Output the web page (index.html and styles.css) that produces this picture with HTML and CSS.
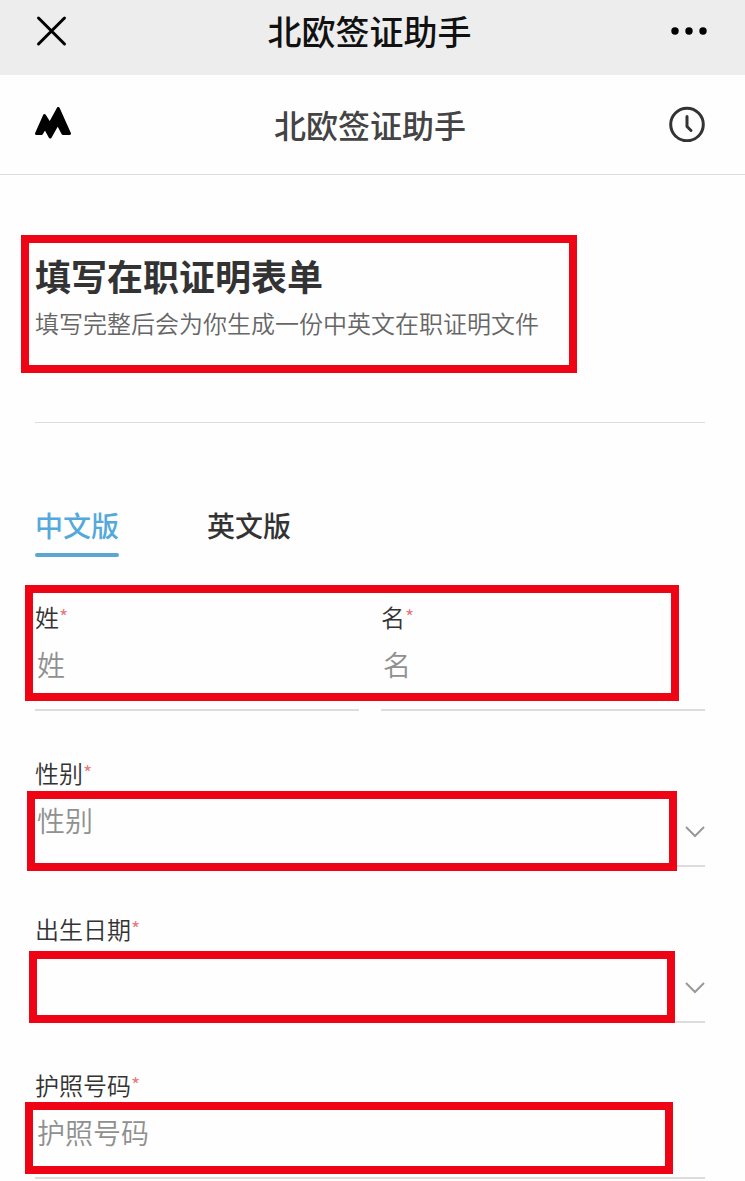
FILE: index.html
```html
<!DOCTYPE html>
<html lang="zh-CN">
<head>
    <meta charset="UTF-8">
    <meta name="viewport" content="width=device-width, initial-scale=1.0">
    <title>北欧签证助手</title>
    <link rel="stylesheet" href="styles.css">
</head>
<body>

    <div class="topbar">
        <button type="button" class="icon-btn" aria-label="关闭">
            <svg width="34" height="34" viewBox="0 0 34 34" fill="none" stroke="#000" stroke-width="3" stroke-linecap="round">
                <path d="M4.500 4L30.500 30M30.500 4L4.500 30"/>
            </svg>
        </button>
        <div class="topbar-title">北欧签证助手</div>
        <button type="button" class="icon-btn" aria-label="更多">
            <svg width="36" height="8" viewBox="0 0 36 8" fill="#000">
                <circle cx="4" cy="4" r="3.700"/>
                <circle cx="18" cy="4" r="3.700"/>
                <circle cx="32" cy="4" r="3.700"/>
            </svg>
        </button>
    </div>

    <header class="header">
        <a href="#" class="logo" aria-label="首页">
            <svg width="36" height="34" viewBox="0 0 36 34" fill="#000" stroke="#000" stroke-width="3" stroke-linejoin="round">
                <path d="M1.500 26.500L9.500 8.500L14.800 17L23.300 1.500L34.500 26.500H28L22.800 16.500L15.200 30L10 20.500L6.500 26.500Z"/>
            </svg>
        </a>
        <h1 class="header-title">北欧签证助手</h1>
        <button type="button" class="icon-btn" aria-label="历史记录">
            <svg width="36" height="36" viewBox="0 0 36 36" fill="none" stroke="#333" stroke-width="3" stroke-linecap="round" stroke-linejoin="round">
                <circle cx="18" cy="18.500" r="16.300"/>
                <path d="M18 10.500V20.500L22 24.500"/>
            </svg>
        </button>
    </header>

    <main class="content">
        <section class="intro">
            <h2>填写在职证明表单</h2>
            <p>填写完整后会为你生成一份中英文在职证明文件</p>
            <span class="mark mark-intro"></span>
        </section>

        <nav class="tabs">
            <a href="#" class="tab active">中文版</a>
            <a href="#" class="tab">英文版</a>
        </nav>

        <form class="form">
            <div class="row">
                <div class="field">
                    <label for="surname">姓<span class="required">*</span></label>
                    <input type="text" id="surname" placeholder="姓">
                </div>
                <div class="field">
                    <label for="name">名<span class="required">*</span></label>
                    <input type="text" id="name" placeholder="名">
                </div>
                <span class="mark mark-name"></span>
            </div>

            <div class="field">
                <label for="gender">性别<span class="required">*</span></label>
                <div class="select">
                    <select id="gender">
                        <option value="">性别</option>
                    </select>
                    <svg class="arrow" width="20" height="12" viewBox="0 0 20 12" fill="none" stroke="#999" stroke-width="2">
                        <path d="M1 1L10 10L19 1"/>
                    </svg>
                </div>
                <span class="mark mark-gender"></span>
            </div>

            <div class="field">
                <label for="birthday">出生日期<span class="required">*</span></label>
                <div class="select">
                    <select id="birthday">
                        <option value=""></option>
                    </select>
                    <svg class="arrow" width="20" height="12" viewBox="0 0 20 12" fill="none" stroke="#999" stroke-width="2">
                        <path d="M1 1L10 10L19 1"/>
                    </svg>
                </div>
                <span class="mark mark-birthday"></span>
            </div>

            <div class="field">
                <label for="passport">护照号码<span class="required">*</span></label>
                <input type="text" id="passport" placeholder="护照号码">
                <span class="mark mark-passport"></span>
            </div>
        </form>
    </main>

</body>
</html>
```
FILE: styles.css
```css
* {
    box-sizing: border-box;
}
body {
    margin: 0;
    font-family: "Noto Sans CJK SC", sans-serif;
    background-color: #fefefe;
    color: #333;
}
a {
    color: inherit;
    text-decoration: none;
}
.topbar,
.header {
    display: flex;
    align-items: center;
    justify-content: space-between;
}
.topbar {
    height: 75px;
    padding: 0 38px 14px 34px;
    background-color: #ededed;
}
.topbar-title {
    font-size: 34px;
    line-height: 40px;
    font-weight: 500;
    color: #111;
}
.header {
    height: 100px;
    padding: 0 40px 2px 35px;
    border-bottom: 1px solid #ddd;
}
.header-title {
    margin: 0;
    font-size: 32px;
    line-height: 40px;
    font-weight: 500;
    color: #444;
}
.icon-btn {
    display: flex;
    padding: 0;
    border: none;
    background: none;
    cursor: pointer;
}
.logo {
    display: flex;
}
.content {
    padding: 60px 40px 0 35px;
}
.intro {
    position: relative;
    padding: 16px 0 81px;
    border-bottom: 1px solid #ddd;
}
.intro h2 {
    margin: 0 0 6px;
    font-size: 36px;
    line-height: 48px;
    font-weight: 700;
}
.intro p {
    margin: 0;
    font-size: 24px;
    line-height: 36px;
    font-weight: 350;
    color: #666;
}
.tabs {
    display: flex;
    gap: 88px;
    margin: 82px 0 43px;
}
.tab {
    padding-bottom: 8px;
    border-bottom: 4px solid transparent;
    font-size: 28px;
    line-height: 40px;
    font-weight: 500;
}
.tab.active {
    position: relative;
    color: #54a9dc;
}
.tab.active::after {
    content: "";
    position: absolute;
    left: 0;
    right: 0;
    bottom: -4px;
    height: 4px;
    border-radius: 2px;
    background-color: #5ba7d1;
}
.form {
    display: flex;
    flex-direction: column;
    gap: 45px;
}
.row {
    position: relative;
    display: grid;
    grid-template-columns: 1fr 1fr;
    gap: 22px;
}
.field {
    position: relative;
}
.field label {
    display: block;
    margin-bottom: 2px;
    font-size: 24px;
    line-height: 34px;
    font-weight: 350;
}
.required {
    font-size: 20px;
    line-height: 20px;
    vertical-align: 2px;
    color: #e87878;
}
.field input,
.field select {
    display: block;
    width: 100%;
    height: 75px;
    margin: 0;
    padding: 0 2px 17px;
    border: none;
    border-bottom: 2px solid #ddd;
    border-radius: 0;
    outline: none;
    background: none;
    appearance: none;
    font-family: inherit;
    font-size: 28px;
    font-weight: 350;
    color: #909090;
}
.field input::placeholder {
    color: #909090;
}
.select {
    display: grid;
    align-items: center;
}
.select select,
.arrow {
    grid-area: 1 / 1;
}
.arrow {
    justify-self: end;
    margin-top: 4px;
    pointer-events: none;
}

/* red frames drawn over the form */
.mark {
    position: absolute;
    border: 8px solid #ee0414;
    pointer-events: none;
}
.mark-intro {
    top: 0;
    left: -14px;
    width: 556px;
    height: 138px;
}
.mark-name {
    top: -15px;
    left: -10px;
    right: 26px;
    height: 116px;
}
.mark-gender {
    top: 35px;
    left: -8px;
    right: 28px;
    height: 80px;
}
.mark-birthday {
    top: 39px;
    left: -6px;
    right: 30px;
    height: 72px;
}
.mark-passport {
    top: 34px;
    left: -10px;
    right: 32px;
    height: 72px;
}
```
